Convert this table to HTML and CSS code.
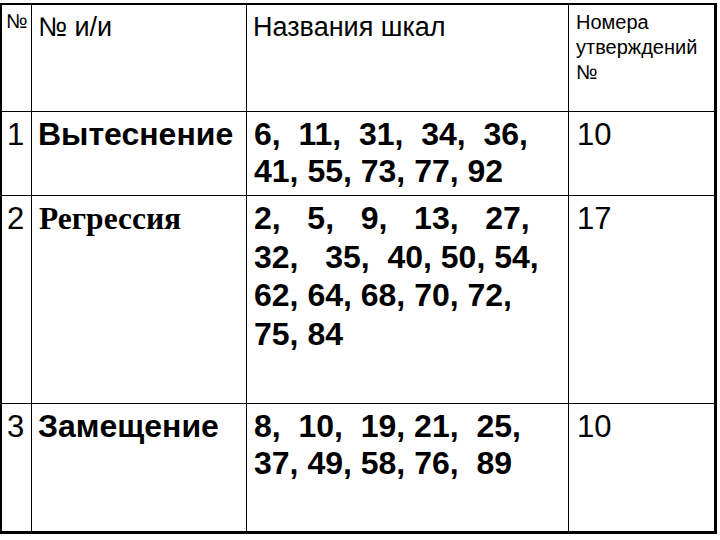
FILE: index.html
```html
<!DOCTYPE html>
<html lang="ru">
<head>
<meta charset="utf-8">
<title>Шкалы</title>
<link rel="stylesheet" href="styles.css">
</head>
<body>
<div class="sheet">
  <div class="cell head num-col"><span class="small-no">№</span></div>
  <div class="cell head name-col"><span class="head-big">№ и/и</span></div>
  <div class="cell head items-col"><span class="head-big">Названия шкал</span></div>
  <div class="cell head count-col"><span class="head-small">Номера<br>утверждений<br>№</span></div>

  <div class="cell idx">1</div>
  <div class="cell name">Вытеснение</div>
  <div class="cell items">6,  11,  31,  34,  36,
41, 55, 73, 77, 92</div>
  <div class="cell count">10</div>

  <div class="cell idx">2</div>
  <div class="cell name serif">Регрессия</div>
  <div class="cell items tall">2,   5,   9,   13,   27,
32,   35,  40, 50, 54,
62, 64, 68, 70, 72,
75, 84</div>
  <div class="cell count">17</div>

  <div class="cell idx">3</div>
  <div class="cell name">Замещение</div>
  <div class="cell items">8,  10,  19, 21,  25,
37, 49, 58, 76,  89</div>
  <div class="cell count">10</div>
</div>
</body>
</html>
```
FILE: styles.css
```css
html, body {
  margin: 0;
  padding: 0;
  background: #ffffff;
}

body {
  font-family: "Liberation Sans", Arial, sans-serif;
  color: #000000;
}

.sheet {
  display: grid;
  grid-template-columns: 29px 214px 321px 145px;
  grid-template-rows: 106px 83px 207px 127px;
  gap: 1px;
  background: #000000;
  width: max-content;
  margin-top: 3px;
  border-style: solid;
  border-color: #000000;
  border-width: 2px 3px 3px 2px;
}

.cell {
  background: #ffffff;
  overflow: hidden;
}

.head {
  padding-top: 7px;
}

.num-col {
  padding-left: 4px;
  padding-top: 6px;
}

.small-no {
  font-size: 20px;
  line-height: 20px;
}

.name-col {
  padding-left: 6px;
}

.items-col {
  padding-left: 6px;
}

.head-big {
  font-size: 27px;
  line-height: 30px;
}

.count-col {
  padding-left: 7px;
  padding-top: 5px;
}

.head-small {
  display: block;
  font-size: 20px;
  line-height: 25px;
}

.idx,
.name,
.items,
.count {
  padding-top: 4px;
  line-height: 37px;
}

.items.tall {
  line-height: 38.5px;
  padding-top: 3px;
}

.idx {
  font-size: 31px;
  padding-left: 5px;
}

.name {
  font-size: 32px;
  font-weight: bold;
  padding-left: 6px;
}

.name.serif {
  font-family: "Liberation Serif", "Times New Roman", serif;
  font-size: 31.5px;
  padding-left: 7px;
}

.items {
  font-size: 32px;
  font-weight: bold;
  padding-left: 7px;
  white-space: pre;
}

.count {
  font-size: 31px;
  padding-left: 8px;
}
```
